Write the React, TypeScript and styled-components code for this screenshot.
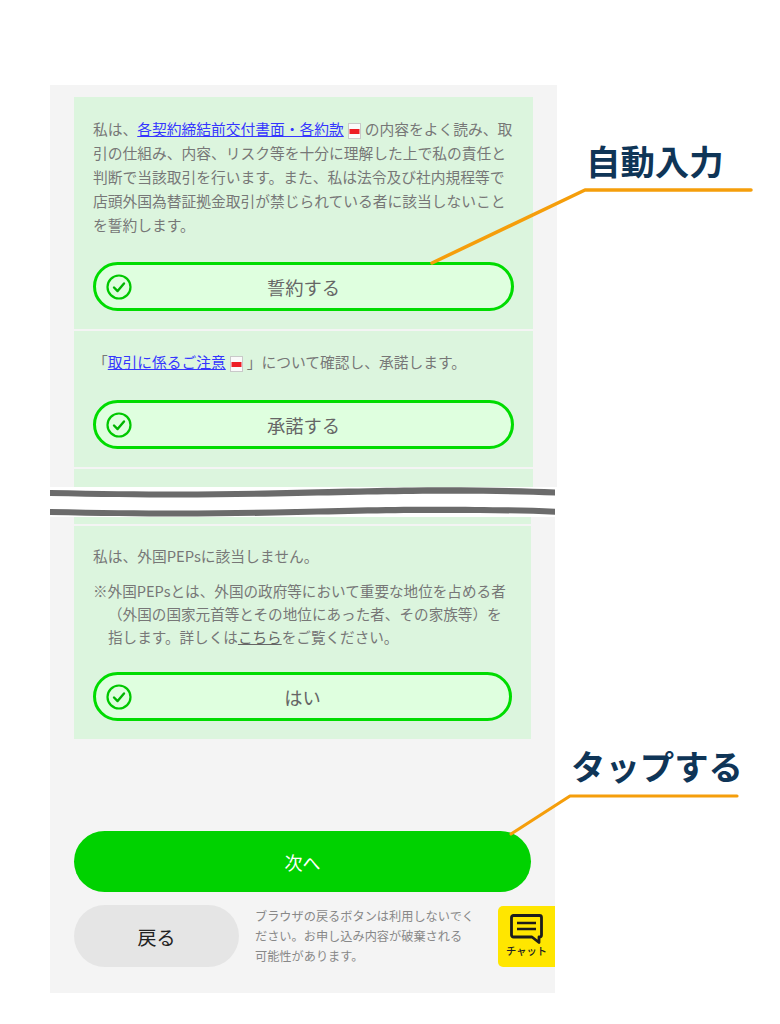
import { FC, ReactNode } from 'react';
import styled, { createGlobalStyle } from 'styled-components';

const GlobalStyle = createGlobalStyle`
   html, body {
      margin: 0;
      padding: 0;
      background: #fff;
   }
   body {
      font-family: "Noto Sans CJK JP", "Noto Sans", sans-serif;
   }
`;

const Page = styled.div`
   position: relative;
   width: 780px;
   height: 1024px;
   padding: 85px 0 0 50px;
   box-sizing: border-box;
   overflow: hidden;
`;

const TopPanel = styled.div`
   width: 507px;
   height: 402px;
   padding: 12px 24px 0;
   box-sizing: border-box;
   background: #f4f4f4;
   overflow: hidden;
`;

const BottomPanel = styled.div`
   width: 505px;
   height: 476px;
   padding: 0 24px;
   box-sizing: border-box;
   background: #f4f4f4;
   display: flex;
   flex-direction: column;
`;

const Stack = styled.div`
   display: flex;
   flex-direction: column;
   gap: 2px;
`;

const Section = styled.section<{ $top: number; $bottom: number }>`
   background: #dcf5de;
   padding: ${p => p.$top}px 19px ${p => p.$bottom}px;
`;

const Stub = styled.div<{ $height: number }>`
   background: #dcf5de;
   height: ${p => p.$height}px;
`;

const Text = styled.p`
   margin: 0;
   font-size: 14.75px;
   line-height: 24px;
   color: #777;
   white-space: nowrap;
`;

const Note = styled.p`
   margin: 11px 0 0;
   padding-left: 15px;
   text-indent: -15px;
   font-size: 14.6px;
   line-height: 23px;
   color: #777;
   white-space: nowrap;
`;

const DocLink = styled.a`
   color: #3535ff;
   text-decoration: underline;
`;

const PlainLink = styled.a`
   color: #666;
   text-decoration: underline;
`;

const PdfBox = styled.svg`
   display: inline-block;
   width: 13px;
   height: 16px;
   margin: 0 4px;
   vertical-align: -4px;
`;

const CheckButton = styled.div<{ $gap: number }>`
   display: grid;
   grid-template-columns: 1fr auto 1fr;
   align-items: center;
   height: 49px;
   margin-top: ${p => p.$gap}px;
   padding: 0 10px;
   box-sizing: border-box;
   border: 3px solid #00dc00;
   border-radius: 25px;
   background: #dfffdf;
   font-size: 18.3px;
   line-height: 22px;
   color: #666;
`;

const CheckIcon = styled.svg`
   width: 26px;
   height: 26px;
   display: block;
`;

const BreakStrip = styled.svg`
   display: block;
   width: 507px;
   height: 30px;
`;

const NextButton = styled.div`
   display: flex;
   align-items: center;
   justify-content: center;
   height: 61px;
   margin-top: 92px;
   border-radius: 31px;
   background: #00d200;
   color: #fff;
   font-size: 18px;
`;

const FooterRow = styled.div`
   display: flex;
   align-items: center;
   margin-top: 13px;
   margin-right: -24px;
`;

const BackButton = styled.div`
   display: flex;
   align-items: center;
   justify-content: center;
   flex: none;
   width: 165px;
   height: 62px;
   border-radius: 31px;
   background: #e5e5e5;
   color: #222;
   font-size: 19px;
`;

const BrowserNote = styled.p`
   flex: 1;
   margin: 0 0 0 16px;
   font-size: 12.2px;
   line-height: 20px;
   color: #888;
   white-space: nowrap;
`;

const ChatTab = styled.div`
   display: flex;
   flex-direction: column;
   align-items: center;
   flex: none;
   align-self: flex-end;
   width: 57px;
   height: 61px;
   padding-top: 8px;
   box-sizing: border-box;
   border-radius: 5px 0 0 5px;
   background: #ffe600;
   color: #222;
   font-size: 10.3px;
   font-weight: 500;
   line-height: 14px;
`;

const ChatIcon = styled.svg`
   width: 33px;
   height: 30px;
   display: block;
   flex: none;
`;

const Callout = styled.div<{ $left: number; $top: number }>`
   position: absolute;
   left: ${p => p.$left}px;
   top: ${p => p.$top}px;
   font-size: 34.4px;
   line-height: 40px;
   font-weight: 700;
   color: #0f3557;
   white-space: nowrap;
`;

const Leaders = styled.svg`
   position: absolute;
   left: 0;
   top: 0;
   width: 780px;
   height: 1024px;
   pointer-events: none;
`;

const Pdf: FC = () => (
   <PdfBox viewBox="0 0 13 16">
      <rect x="0.5" y="0.5" width="12" height="15" fill="#fafafa" stroke="#c9c9c9" />
      <rect x="1.5" y="6" width="10" height="5" fill="#ee1c25" />
   </PdfBox>
);

const Check: FC = () => (
   <CheckIcon viewBox="0 0 26 26">
      <circle cx="13" cy="13" r="11.5" fill="none" stroke="#00c800" strokeWidth="2.2" />
      <path d="M8 13.5l3.6 3.6L18 9.5" fill="none" stroke="#00b400" strokeWidth="2.4" strokeLinecap="round" strokeLinejoin="round" />
   </CheckIcon>
);

const Confirm: FC<{ gap: number; children: ReactNode }> = ({ gap, children }) => (
   <CheckButton $gap={gap}>
      <Check />
      <span>{children}</span>
      <span />
   </CheckButton>
);

const App: FC = () => (
   <>
      <GlobalStyle />
      <Page>
         <TopPanel>
            <Stack>
               <Section $top={20} $bottom={18}>
                  <Text>
                     私は、<DocLink href="#">各契約締結前交付書面・各約款</DocLink><Pdf />の内容をよく読み、取<br />
                     引の仕組み、内容、リスク等を十分に理解した上で私の責任と<br />
                     判断で当該取引を行います。また、私は法令及び社内規程等で<br />
                     店頭外国為替証拠金取引が禁じられている者に該当しないこと<br />
                     を誓約します。
                  </Text>
                  <Confirm gap={25}>誓約する</Confirm>
               </Section>
               <Section $top={19} $bottom={18}>
                  <Text>
                     「<DocLink href="#">取引に係るご注意</DocLink><Pdf />」について確認し、承諾します。
                  </Text>
                  <Confirm gap={26}>承諾する</Confirm>
               </Section>
               <Stub $height={40} />
            </Stack>
         </TopPanel>
         <BreakStrip viewBox="0 0 507 30">
            <path d="M0 3C50 4 90 4.5 128 4.5C210 4.5 300 1 362 0.5C420 0 470 1 505 2.5V8.5C470 7 420 6.5 362 7C300 7.5 210 10.5 128 10.5C90 10.5 50 10 0 9Z" fill="#6b6b6b" />
            <path d="M0 22C50 23 90 23.6 128 23.6C210 23.6 300 20 362 19.7C420 19.4 470 20.2 505 21.7V27.7C470 26.2 420 25.6 362 26C300 26.4 210 29.6 128 29.6C90 29.6 50 29 0 28Z" fill="#6b6b6b" />
         </BreakStrip>
         <BottomPanel>
            <Stack>
               <Stub $height={7} />
               <Section $top={18} $bottom={18}>
                  <Text>私は、外国PEPsに該当しません。</Text>
                  <Note>
                     ※外国PEPsとは、外国の政府等において重要な地位を占める者<br />
                     （外国の国家元首等とその地位にあった者、その家族等）を<br />
                     指します。詳しくは<PlainLink href="#">こちら</PlainLink>をご覧ください。
                  </Note>
                  <Confirm gap={24}>はい</Confirm>
               </Section>
            </Stack>
            <NextButton>次へ</NextButton>
            <FooterRow>
               <BackButton>戻る</BackButton>
               <BrowserNote>
                  ブラウザの戻るボタンは利用しないでく<br />
                  ださい。お申し込み内容が破棄される<br />
                  可能性があります。
               </BrowserNote>
               <ChatTab>
                  <ChatIcon viewBox="0 0 33 30">
                     <path d="M3.5 1.5H29.5A2 2 0 0 1 31.5 3.5V21A2 2 0 0 1 29.5 23H29V28.5L22 23H3.5A2 2 0 0 1 1.5 21V3.5A2 2 0 0 1 3.5 1.5Z" fill="none" stroke="#1c1c1c" strokeWidth="2.8" strokeLinejoin="round" />
                     <path d="M7 9H26M7 15H26" stroke="#1c1c1c" strokeWidth="2.4" />
                  </ChatIcon>
                  チャット
               </ChatTab>
            </FooterRow>
         </BottomPanel>
         <Leaders viewBox="0 0 780 1024">
            <path d="M432 263L585 190H751" fill="none" stroke="#f59e0b" strokeWidth="3.5" strokeLinecap="round" strokeLinejoin="round" />
            <path d="M511 834L570 796H737" fill="none" stroke="#f59e0b" strokeWidth="3.2" strokeLinecap="round" strokeLinejoin="round" />
         </Leaders>
         <Callout $left={586} $top={140}>自動入力</Callout>
         <Callout $left={571} $top={745}>タップする</Callout>
      </Page>
   </>
);

export default App;
